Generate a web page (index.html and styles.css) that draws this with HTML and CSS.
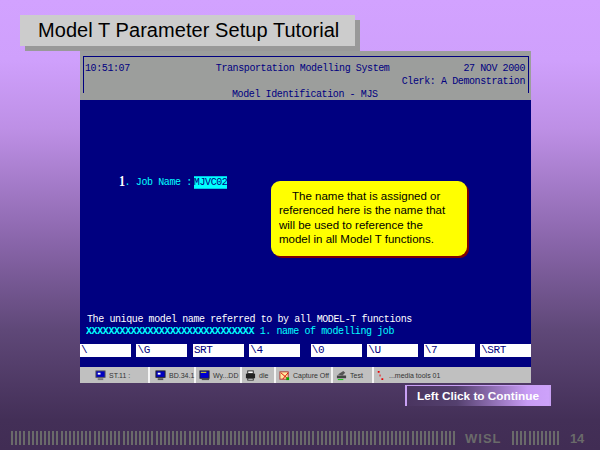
FILE: index.html
```html
<!DOCTYPE html>
<html lang="en">
<head>
<meta charset="utf-8">
<title>Model T Parameter Setup Tutorial</title>
<link rel="stylesheet" href="styles.css">
</head>
<body>
<div class="slide">
  <h1 class="title">Model T Parameter Setup Tutorial</h1>
  <div class="screen">
    <div class="term-head">
      <div class="head-frame">
        <div class="head-row"><span>10:51:07</span><span class="head-mid">Transportation Modelling System</span><span class="head-right">27 NOV 2000</span></div>
        <div class="head-row"><span class="head-right">Clerk: A Demonstration</span></div>
        <div class="head-row head-model"><span>Model Identification - MJS</span></div>
      </div>
    </div>
    <div class="term-body">
      <div class="job-line"><b class="job-num">1</b><span class="job-label">. Job Name :</span><span class="job-input">MJVC02</span></div>
      <div class="callout"><p>The name that is assigned or referenced here is the name that will be used to reference the model in all Model T functions.</p></div>
      <div class="help-line">The unique model name referred to by all MODEL-T functions</div>
      <div class="help-code"><span class="help-x">XXXXXXXXXXXXXXXXXXXXXXXXXXXXXX</span> 1. name of modelling job</div>
      <div class="fkeys">
        <span class="fkey">\</span><span class="fkey">\G</span><span class="fkey">SRT</span><span class="fkey">\4</span><span class="fkey fkey-gap">\0</span><span class="fkey">\U</span><span class="fkey">\7</span><span class="fkey">\SRT</span>
      </div>
    </div>
    <div class="taskbar">
      <div class="task task-1"><svg class="ico" viewBox="0 0 12 12"><rect x="1" y="1" width="10" height="7" fill="#0000c0" stroke="#555"/><rect x="3" y="3" width="3" height="2" fill="#fff"/><rect x="3" y="9" width="6" height="2" fill="#777"/></svg><span>ST.11 :</span></div>
      <div class="task task-2"><svg class="ico" viewBox="0 0 12 12"><rect x="1" y="1" width="10" height="7" fill="#0000c0" stroke="#222"/><rect x="3" y="3" width="3" height="2" fill="#fff"/><rect x="3" y="9" width="6" height="2" fill="#555"/></svg><span>BD.34.1</span></div>
      <div class="task task-3"><svg class="ico" viewBox="0 0 12 12"><rect x="1" y="1" width="10" height="8" fill="#0000d0" stroke="#222"/><rect x="2" y="2" width="6" height="1" fill="#ff0"/><rect x="3" y="10" width="8" height="1" fill="#333"/></svg><span>Wy...DD</span></div>
      <div class="task task-4"><svg class="ico" viewBox="0 0 12 12"><rect x="3" y="1" width="6" height="3" fill="#fff" stroke="#222"/><rect x="1" y="4" width="10" height="5" fill="#222"/><rect x="3" y="9" width="6" height="2" fill="#fff" stroke="#222"/></svg><span>dle</span></div>
      <div class="task task-5"><svg class="ico" viewBox="0 0 12 12"><rect x="1" y="2" width="9" height="8" fill="#ffe9a0" stroke="#a33"/><path d="M2 3l8 7M10 3l-6 7" stroke="#d00" fill="none"/><rect x="8" y="8" width="3" height="3" fill="#0a0"/></svg><span>Capture Off</span></div>
      <div class="task task-6"><svg class="ico" viewBox="0 0 12 12"><path d="M2 5l6-4 2 2-3 3z" fill="#555"/><rect x="1" y="6" width="10" height="3" fill="#444"/><rect x="2" y="10" width="6" height="1" fill="#0c0"/></svg><span>Test</span></div>
      <div class="task task-7"><svg class="ico" viewBox="0 0 12 12"><path d="M3 1h2v2H3zM5 5h1v2H5zM7 9h2v2H7z" fill="#e00"/></svg><span>...media tools 01</span></div>
    </div>
  </div>
  <div class="continue">Left Click to Continue</div>
  <div class="footer">
    <div class="bars bars-long"></div>
    <span class="brand">WISL</span>
    <div class="bars bars-short"></div>
    <span class="page-no">14</span>
  </div>
</div>
</body>
</html>
```

FILE: styles.css
```css
* { box-sizing: border-box; }
html, body { margin: 0; padding: 0; }
body { width: 600px; height: 450px; overflow: hidden; }
.slide {
  width: 600px; height: 450px; padding-top: 15px;
  display: flex; flex-direction: column;
  font-family: "Liberation Sans", Arial, sans-serif;
  background: linear-gradient(180deg, #d2a2ff 0, #cfa0fc 60px, #bd8fe5 130px, #8a66ab 240px, #5f4878 330px, #432f57 420px, #412d54 450px);
}
.title {
  margin: 0 0 0 20px; width: 335px; height: 31px;
  padding-left: 18px;
  background: #cccccc; box-shadow: 5px 5px 0 #999999;
  font-size: 20px; font-weight: 400; letter-spacing: 0.06px; line-height: 31px; color: #000;
}
.screen {
  margin: 5px 0 0 80px; width: 451px; height: 332px;
  display: flex; flex-direction: column;
  font-family: "Liberation Mono", monospace; font-size: 10px; letter-spacing: -0.4px;
}
.term-head { height: 49px; padding: 5px 2px 7px 3px; background: #9c9e9c; color: #000080; }
.head-frame { height: 37px; border: 1px solid #000080; border-bottom: 0; padding: 5px 3px 0 1px; }
.head-row { display: flex; height: 13px; line-height: 13px; transform: scaleY(1.14); }
.head-mid { margin-left: 86px; }
.head-right { margin-left: auto; }
.head-model { margin: 0 0 0 147px; }
.term-body { position: relative; height: 267px; background: #000080; display: flex; flex-direction: column; }
.job-line { display: flex; align-items: center; height: 13px; margin: 76px 0 0 39px; color: #00ffff; transform: scaleY(1.14); }
.job-num { color: #fff; font-family: "Liberation Serif", serif; font-size: 12px; }
.job-input { height: 11px; line-height: 11px; margin-left: 2px; padding: 0; background: #00ffff; color: #000080; }
.callout {
  position: absolute; left: 191px; top: 81px; width: 196px; height: 75px;
  padding: 8px 16px 0 8px;
  background: #ffff00; border-radius: 9px; box-shadow: 2px 2px 0 #800000;
  font-family: "Liberation Sans", Arial, sans-serif; font-size: 11.5px; letter-spacing: 0; line-height: 14.3px; color: #000;
}
.callout p { margin: 0; text-indent: 13px; }
.help-line { margin: 125px 0 0 7px; height: 12px; line-height: 12px; color: #fff; transform: scaleY(1.05); }
.help-code { margin-left: 6px; height: 12px; line-height: 12px; color: #00ffff; transform: scaleY(1.05); }
.help-x { font-weight: 700; }
.fkeys { display: flex; gap: 5.6px; margin-top: 6px; height: 13px; }
.fkey { width: 51px; height: 13px; line-height: 13px; padding-left: 1px; background: #fff; color: #000080; font-size: 11px; }
.fkey-gap { margin-left: 5px; }
.taskbar { height: 16px; background: #c0c0c0; display: flex; font-family: "Liberation Sans", Arial, sans-serif; font-size: 7px; letter-spacing: 0; color: #333; }
.task { display: flex; align-items: center; gap: 3px; height: 16px; border-right: 2px solid #f4f4f4; }
.ico { width: 11px; height: 11px; flex: none; }
.task-1 { width: 70px; padding-left: 15px; }
.task-2 { width: 46px; padding-left: 5px; }
.task-3 { width: 46px; padding-left: 3px; }
.task-4 { width: 34px; padding-left: 3px; }
.task-5 { width: 57px; padding-left: 3px; }
.task-6 { width: 41px; padding-left: 3px; }
.task-7 { flex: 1; padding-left: 1px; border-right: 0; }
.continue {
  margin: 2px 0 0 405px; width: 146px; height: 21px;
  border: 1px solid #c9a0f5; border-width: 1px 2px 0 2px;
  background: linear-gradient(90deg, #4a3560 0, #54406e 35%, #c89cf5 85%, #cda2fa 100%);
  font-size: 11.8px; font-weight: 700; line-height: 20px; text-align: center; color: #fff;
}
.footer { display: flex; align-items: center; height: 14px; margin: 25px 0 0 11px; color: #6a6a6a; font-weight: 700; }
.bars { height: 14px; background: repeating-linear-gradient(90deg, #6a6a6a 0, #6a6a6a 2px, transparent 2px, transparent 4.13px); }
.bars-long { width: 444px; }
.bars-short { width: 48px; margin-left: 11px; }
.brand { margin-left: 10px; font-size: 13px; letter-spacing: 1px; width: 36px; }
.page-no { margin-left: 10px; font-size: 13px; letter-spacing: -0.3px; }
```
